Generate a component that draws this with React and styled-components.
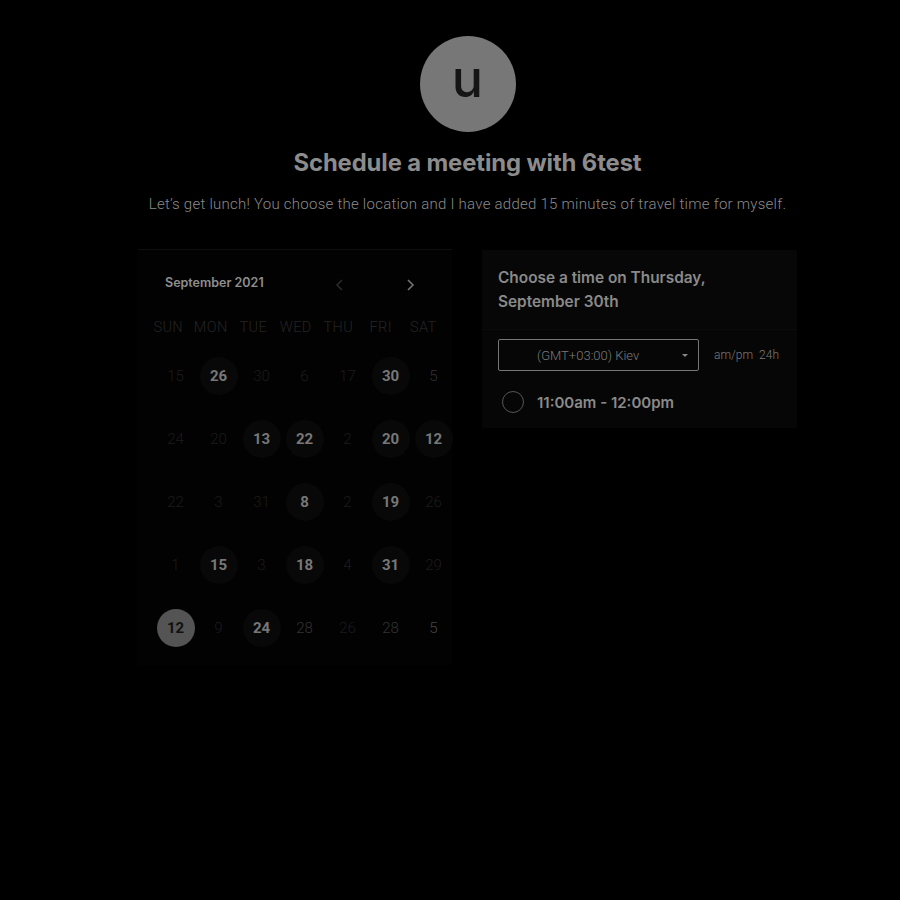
import React from 'react';
import styled, { createGlobalStyle } from 'styled-components';

const Global = createGlobalStyle`
  html, body {
    margin: 0;
    background: #000;
    height: 100%;
  }
  body {
    font-family: Roboto, "Liberation Sans", sans-serif;
    color: #888;
  }
`;

const Page = styled.div`
  min-height: 900px;
  background: #000;
  display: flex;
  flex-direction: column;
  align-items: center;
  padding: 36px 0 0 35px;
  box-sizing: border-box;
`;

const Avatar = styled.div`
  width: 96px;
  height: 96px;
  border-radius: 50%;
  background: #777;
  display: flex;
  align-items: center;
  justify-content: center;
  font-family: Inter, sans-serif;
  font-size: 52px;
  font-weight: 500;
  color: #151515;
  line-height: 1;
  padding-bottom: 10px;
  box-sizing: border-box;
`;

const Title = styled.h1`
  margin: 16px 0 0;
  font-family: Inter, sans-serif;
  font-size: 23.8px;
  font-weight: 700;
  color: #8c8c8c;
  letter-spacing: -0.1px;
`;

const Subtitle = styled.p`
  margin: 18px 0 0;
  font-family: Roboto, sans-serif;
  font-size: 15px;
  font-weight: 300;
  letter-spacing: 0.25px;
  color: #8a8a8a;
`;

const Columns = styled.div`
  display: flex;
  align-items: flex-start;
  gap: 30px;
  width: 659px;
  margin-top: 36px;
`;

const Calendar = styled.div`
  width: 314px;
  height: 416px;
  background: #020202;
  border-top: 1px solid #0f0f0f;
  box-sizing: border-box;
  padding: 20px 0 0 16px;
`;

const CalHeader = styled.div`
  display: flex;
  align-items: center;
  height: 24px;
  padding-left: 11px;
`;

const Month = styled.div`
  font-family: Inter, sans-serif;
  font-size: 12.5px;
  font-weight: 600;
  color: #8e8e8e;
  width: 165px;
`;

const Nav = styled.button`
  background: none;
  border: 0;
  padding: 0;
  width: 20px;
  height: 24px;
  display: flex;
  align-items: center;
  justify-content: center;
  color: ${(p) => (p.$dim ? '#2a2a2a' : '#747474')};
  margin-left: ${(p) => p.$gap}px;
  margin-top: 6px;
`;

const WeekRow = styled.div`
  display: grid;
  grid-template-columns: repeat(7, 42.5px);
  margin: 24px 0 0 -7px;
`;

const WeekDay = styled.div`
  text-align: center;
  font-size: 14.5px;
  font-weight: 300;
  letter-spacing: 0.4px;
  color: #242424;
  height: 20px;
  line-height: 20px;
`;

const Grid = styled.div`
  display: grid;
  grid-template-columns: repeat(7, 43px);
  margin-top: 6px;
`;

const Cell = styled.div`
  height: 63px;
  display: flex;
  align-items: center;
  justify-content: center;
`;

const Day = styled.div`
  width: 38px;
  height: 38px;
  border-radius: 50%;
  display: flex;
  align-items: center;
  justify-content: center;
  font-size: 15px;
  font-weight: ${(p) => (p.$state === 'off' ? 300 : 700)};
  color: ${(p) =>
    p.$state === 'selected' ? '#111' : p.$state === 'on' ? '#777' : p.$tone || '#1c1c1c'};
  background: ${(p) =>
    p.$state === 'selected' ? '#545454' : p.$state === 'on' ? '#080808' : 'transparent'};
`;

const TimePanel = styled.div`
  width: 315px;
  margin-top: 1px;
  background: #060606;
  box-sizing: border-box;
  padding-bottom: 15px;
`;

const TimeHeader = styled.div`
  padding: 16px 16px 15px;
  font-family: Inter, sans-serif;
  font-size: 15.4px;
  font-weight: 600;
  line-height: 24px;
  color: #8a8a8a;
  background: #070707;
  border-bottom: 1px solid #0b0b0b;
`;

const Controls = styled.div`
  display: flex;
  align-items: center;
  padding: 9px 16px 0;
`;

const Select = styled.div`
  width: 201px;
  height: 32px;
  border: 1px solid #777;
  border-radius: 2px;
  box-sizing: border-box;
  display: flex;
  align-items: center;
  padding: 0 10px 0 38px;
  font-size: 13px;
  font-weight: 300;
  color: #7a7a7a;
`;

const SelectText = styled.span`
  flex: 1;
`;

const Caret = styled.span`
  width: 0;
  height: 0;
  border-left: 3.5px solid transparent;
  border-right: 3.5px solid transparent;
  border-top: 3.5px solid #888;
`;

const Format = styled.div`
  margin-left: 15px;
  font-size: 12px;
  font-weight: 300;
  color: #7a7a7a;
  word-spacing: 3px;
`;

const Slot = styled.div`
  display: flex;
  align-items: center;
  padding: 20px 20px 0;
  gap: 13px;
`;

const Radio = styled.span`
  width: 20px;
  height: 20px;
  border: 1.5px solid #555;
  border-radius: 50%;
`;

const SlotText = styled.span`
  font-family: Inter, sans-serif;
  font-size: 15px;
  font-weight: 600;
  color: #8a8a8a;
`;

const Chevron = ({ dir }) => (
  <svg width="12" height="14" viewBox="0 0 12 14" fill="none" stroke="currentColor" strokeWidth="1.6">
    {dir === 'left' ? <path d="M8 2 L3 7 L8 12" /> : <path d="M4 2 L9 7 L4 12" />}
  </svg>
);

const weekdays = ['SUN', 'MON', 'TUE', 'WED', 'THU', 'FRI', 'SAT'];

const days = [
  [15, 0], [26, 1], [30, 0], [6, 0], [17, 0], [30, 1], [5, 0, '#303030'],
  [24, 0], [20, 0], [13, 1], [22, 1], [2, 0], [20, 1], [12, 1],
  [22, 0], [3, 0], [31, 0], [8, 1], [2, 0], [19, 1], [26, 0],
  [1, 0], [15, 1], [3, 0], [18, 1], [4, 0], [31, 1], [29, 0],
  [12, 2], [9, 0], [24, 1], [28, 0, '#333'], [26, 0], [28, 0, '#333'], [5, 0, '#444'],
];

export default function App() {
  return (
    <>
      <Global />
      <Page>
        <Avatar>u</Avatar>
        <Title>Schedule a meeting with 6test</Title>
        <Subtitle>Let’s get lunch! You choose the location and I have added 15 minutes of travel time for myself.</Subtitle>
        <Columns>
          <Calendar>
            <CalHeader>
              <Month>September 2021</Month>
              <Nav $dim $gap={0}><Chevron dir="left" /></Nav>
              <Nav $gap={50}><Chevron dir="right" /></Nav>
            </CalHeader>
            <WeekRow>
              {weekdays.map((w) => (
                <WeekDay key={w}>{w}</WeekDay>
              ))}
            </WeekRow>
            <Grid>
              {days.map(([n, s, tone], i) => (
                <Cell key={i}>
                  <Day $state={s === 2 ? 'selected' : s === 1 ? 'on' : 'off'} $tone={tone}>
                    {n}
                  </Day>
                </Cell>
              ))}
            </Grid>
          </Calendar>
          <TimePanel>
            <TimeHeader>
              Choose a time on Thursday,
              <br />
              September 30th
            </TimeHeader>
            <Controls>
              <Select>
                <SelectText>(GMT+03:00) Kiev</SelectText>
                <Caret />
              </Select>
              <Format>am/pm 24h</Format>
            </Controls>
            <Slot>
              <Radio />
              <SlotText>11:00am - 12:00pm</SlotText>
            </Slot>
          </TimePanel>
        </Columns>
      </Page>
    </>
  );
}
